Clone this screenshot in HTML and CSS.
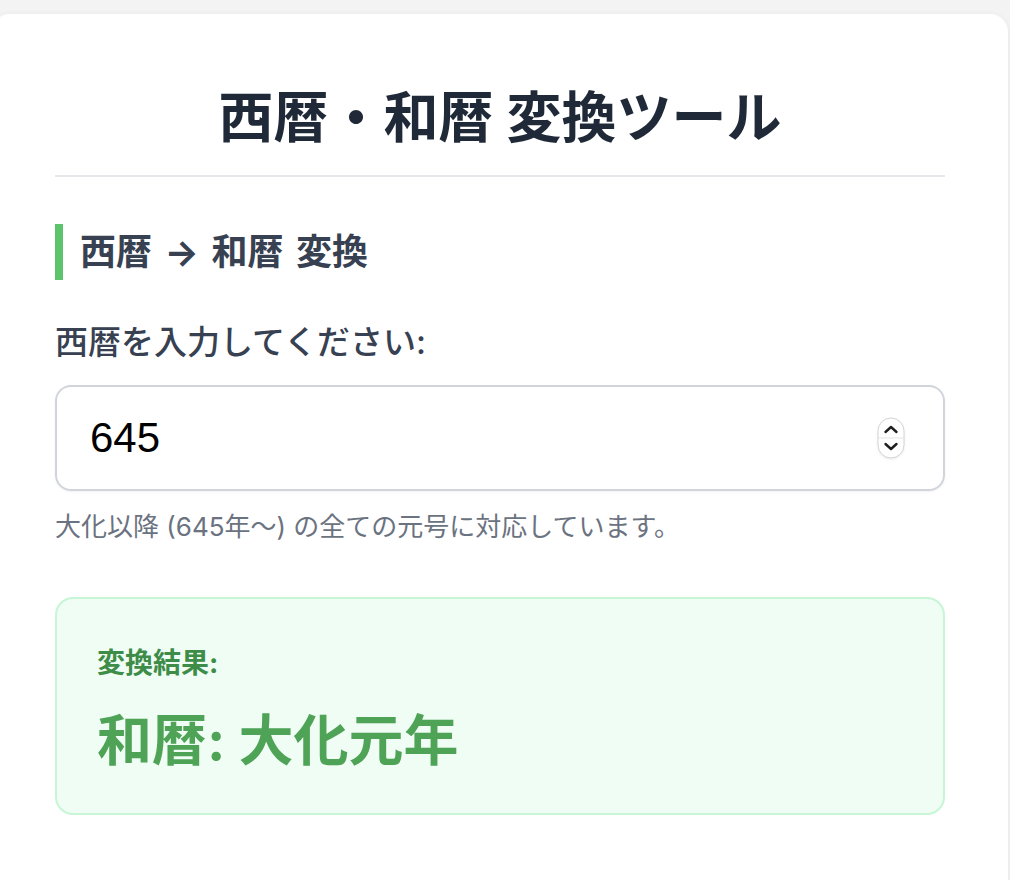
FILE: index.html
```html
<!DOCTYPE html>
<html lang="ja">
<head>
<meta charset="utf-8">
<title>西暦・和暦 変換ツール</title>
<link rel="stylesheet" href="styles.css">
</head>
<body>
<div class="page">
  <main class="card">
    <h1 class="title">西暦・和暦 変換ツール</h1>
    <section class="section">
      <h2 class="section-title">西暦 → 和暦 変換</h2>
      <label class="label" for="year">西暦を入力してください:</label>
      <div class="input-box">
        <input id="year" class="input" type="number" value="645">
        <span class="spinner">
          <svg width="28" height="42" viewBox="0 0 28 42">
            <rect x="1" y="1" width="26" height="40" rx="13" fill="#fff" stroke="#d4d4d8" stroke-width="1"/>
            <line x1="1" y1="21" x2="27" y2="21" stroke="#e4e4e7" stroke-width="1"/>
            <path d="M8.5 15 L14 10 L19.5 15" fill="none" stroke="#1f1f1f" stroke-width="2.4" stroke-linecap="round" stroke-linejoin="round"/>
            <path d="M8.5 27 L14 32 L19.5 27" fill="none" stroke="#1f1f1f" stroke-width="2.4" stroke-linecap="round" stroke-linejoin="round"/>
          </svg>
        </span>
      </div>
      <p class="help">大化以降 (645年〜) の全ての元号に対応しています。</p>
      <div class="result">
        <div class="result-label">変換結果:</div>
        <div class="result-value">和暦: 大化元年</div>
      </div>
    </section>
  </main>
</div>
</body>
</html>
```
FILE: styles.css
```css
html, body {
  margin: 0;
  padding: 0;
  background: #f3f3f4;
  font-family: "Inter", "Noto Sans CJK JP", sans-serif;
}
.page {
  padding-top: 14px;
}
.card {
  background: #ffffff;
  margin: 0 2px 0 -8px;
  padding: 70px 63px 60px;
  border-radius: 18px;
  box-shadow: 0 2px 8px rgba(0,0,0,0.06);
  min-height: 900px;
  box-sizing: border-box;
}
.title {
  margin: 0;
  padding-bottom: 24px;
  border-bottom: 2px solid #e5e7eb;
  text-align: center;
  font-size: 55px;
  line-height: 67px;
  font-weight: 700;
  color: #1f2937;
}
.section {
  display: flex;
  flex-direction: column;
}
.section-title {
  margin: 47px 0 0;
  border-left: 8px solid #5cc46a;
  padding-left: 17px;
  font-size: 36px;
  line-height: 56px;
  font-weight: 700;
  color: #374151;
  word-spacing: 4px;
}
.label {
  margin-top: 39px;
  font-size: 33px;
  line-height: 46px;
  font-weight: 500;
  color: #374151;
}
.input-box {
  margin-top: 20px;
  display: flex;
  align-items: center;
  border: 2px solid #d1d5db;
  border-radius: 16px;
  height: 106px;
  box-sizing: border-box;
  padding: 0 38px 0 33px;
  box-shadow: 0 1px 3px rgba(0,0,0,0.05);
}
.input {
  flex: 1;
  border: none;
  outline: none;
  background: transparent;
  padding: 0;
  font-family: "Liberation Sans", Arial, sans-serif;
  font-size: 42px;
  color: #000;
  -moz-appearance: textfield;
}
.input::-webkit-outer-spin-button,
.input::-webkit-inner-spin-button {
  -webkit-appearance: none;
  margin: 0;
}
.spinner {
  display: flex;
  filter: drop-shadow(0 1px 1px rgba(0,0,0,0.08));
}
.help {
  margin: 19px 0 0;
  font-size: 26px;
  line-height: 34px;
  color: #6b7280;
}
.result {
  margin-top: 53px;
  background: #f0fdf4;
  border: 2px solid #c6f6d5;
  border-radius: 18px;
  padding: 44px 40px 36px;
}
.result-label {
  font-size: 28px;
  line-height: 40px;
  font-weight: 700;
  color: #3d8c48;
}
.result-value {
  margin-top: 21px;
  font-size: 55px;
  line-height: 73px;
  font-weight: 700;
  color: #4ea357;
}
```
